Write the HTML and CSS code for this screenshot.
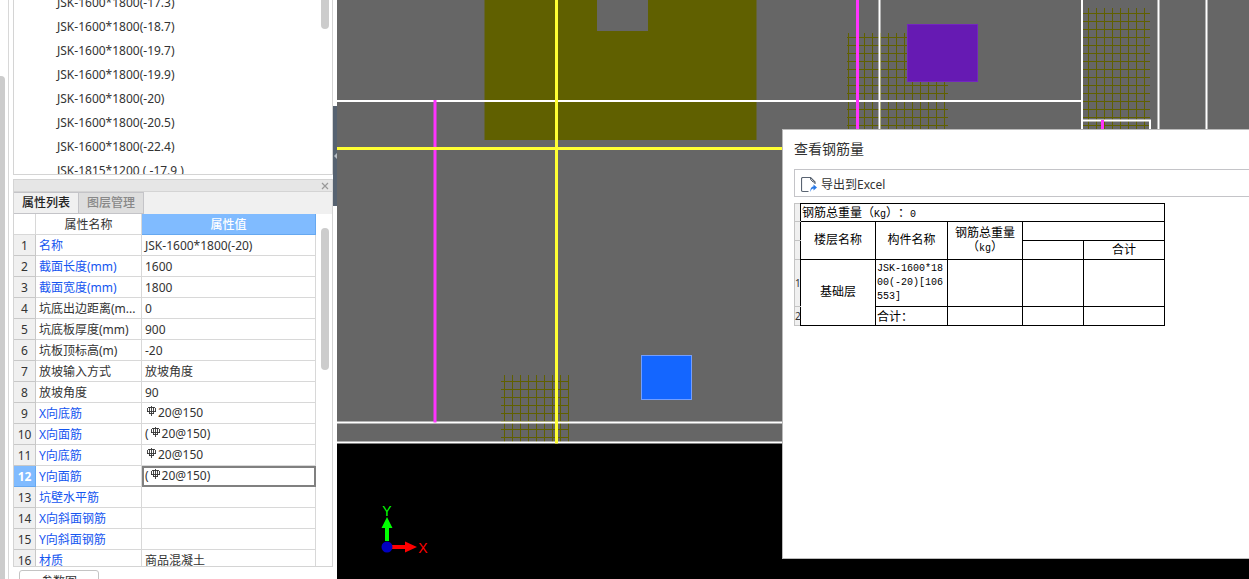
FILE: index.html
```html
<!DOCTYPE html>
<html lang="zh-CN">
<head>
<meta charset="utf-8">
<title>查看钢筋量</title>
<link rel="stylesheet" href="styles.css">
</head>
<body>
<svg class="defs" aria-hidden="true">
  <symbol id="rebar" viewBox="0 0 10 10"><path d="M4.500 0V10M2.500 1V8M6.500 1V8M1 1.500H8M.5 2V6M8.500 2V6M0 5.500H9M2 7.500H7" fill="none" stroke="#333" stroke-width=".9"/></symbol>
</svg>
<div class="app">
  <div class="rail"><div class="rail-thumb"></div></div>
  <aside class="side">
    <section class="tree">
      <ul class="tree-list">
        <li>JSK-1600*1800(-17.3)</li>
        <li>JSK-1600*1800(-18.7)</li>
        <li>JSK-1600*1800(-19.7)</li>
        <li>JSK-1600*1800(-19.9)</li>
        <li>JSK-1600*1800(-20)</li>
        <li>JSK-1600*1800(-20.5)</li>
        <li>JSK-1600*1800(-22.4)</li>
        <li>JSK-1815*1200 ( -17.9 )</li>
      </ul>
      <div class="tree-thumb"></div>
    </section>
    <section class="props">
      <div class="props-bar"><button class="close" aria-label="关闭"><svg width="8" height="8" viewBox="0 0 8 8"><path d="M1 1L7 7M7 1L1 7" stroke="#999" stroke-width="1.200"/></svg></button></div>
      <div class="tabs"><button class="tab active">属性列表</button><button class="tab">图层管理</button></div>
      <div class="props-body">
        <table class="grid">
          <colgroup><col class="c-num"><col class="c-name"><col class="c-val"></colgroup>
          <tr><th></th><th>属性名称</th><th class="sel">属性值</th></tr>
          <tr><td>1</td><td class="key">名称</td><td>JSK-1600*1800(-20)</td></tr>
          <tr><td>2</td><td class="key">截面长度(mm)</td><td>1600</td></tr>
          <tr><td>3</td><td class="key">截面宽度(mm)</td><td>1800</td></tr>
          <tr><td>4</td><td>坑底出边距离(m...</td><td>0</td></tr>
          <tr><td>5</td><td>坑底板厚度(mm)</td><td>900</td></tr>
          <tr><td>6</td><td>坑板顶标高(m)</td><td>-20</td></tr>
          <tr><td>7</td><td>放坡输入方式</td><td>放坡角度</td></tr>
          <tr><td>8</td><td>放坡角度</td><td>90</td></tr>
          <tr><td>9</td><td class="key">X向底筋</td><td class="bar"><svg class="rebar"><use href="#rebar"/></svg>20@150</td></tr>
          <tr><td>10</td><td class="key">X向面筋</td><td class="bar">(<svg class="rebar"><use href="#rebar"/></svg>20@150)</td></tr>
          <tr><td>11</td><td class="key">Y向底筋</td><td class="bar"><svg class="rebar"><use href="#rebar"/></svg>20@150</td></tr>
          <tr class="current"><td>12</td><td class="key">Y向面筋</td><td class="bar">(<svg class="rebar"><use href="#rebar"/></svg>20@150)</td></tr>
          <tr><td>13</td><td class="key">坑壁水平筋</td><td></td></tr>
          <tr><td>14</td><td class="key">X向斜面钢筋</td><td></td></tr>
          <tr><td>15</td><td class="key">Y向斜面钢筋</td><td></td></tr>
          <tr><td>16</td><td class="key">材质</td><td>商品混凝土</td></tr>
        </table>
        <div class="props-thumb"></div>
      </div>
    </section>
    <div class="foot"><button class="param">参数图</button></div>
  </aside>
  <div class="splitter"><button class="fold" aria-label="折叠"><svg width="3" height="8" viewBox="0 0 3 8"><path d="M3 1V7L0 4Z" fill="#b8bec4"/></svg></button></div>
  <main class="stage">
    <svg class="model" width="912" height="579" viewBox="337 0 912 579">
      <defs>
        <pattern id="mesh-a" width="8" height="8" patternUnits="userSpaceOnUse" x="848" y="37"><path d="M.5 0V8M0 .5H8" stroke="#606000" fill="none"/></pattern>
        <pattern id="mesh-b" width="8" height="8" patternUnits="userSpaceOnUse" x="1088" y="13"><path d="M.5 0V8M0 .5H8" stroke="#606000" fill="none"/></pattern>
        <pattern id="mesh-c" width="8" height="8" patternUnits="userSpaceOnUse" x="504" y="381"><path d="M.5 0V8M0 .5H8" stroke="#606000" fill="none"/></pattern>
      </defs>
      <path d="M337 0H1249V443H337Z" fill="#666"/>
      <path d="M484.500 0H597V31H648V0H756.500V140H484.500Z" fill="#606000"/>
      <rect x="847" y="33" width="101" height="100" fill="url(#mesh-a)"/>
      <rect x="1083" y="8" width="67" height="125" fill="url(#mesh-b)"/>
      <rect x="501" y="375" width="68" height="67" fill="url(#mesh-c)"/>
      <g fill="none" stroke="#fff" stroke-width="2">
        <path d="M337 101H1082M1082 0V130M1083 120.500H1150V130M879.500 0V130M1158.500 0V130M1206.500 0V130M337 422.500H790M337 442.500H790"/>
      </g>
      <path d="M857.500 0V130M435 100V422.500M1102.500 120V130" stroke="#ff33ff" stroke-width="3"/>
      <path d="M337 148.500H790M556.500 0V443.500" stroke="#ffff33" stroke-width="3"/>
      <rect x="907.500" y="24.500" width="70" height="57" fill="#661ab3" stroke="#7326bf"/>
      <rect x="641.500" y="355.500" width="50" height="44" fill="#1466ff" stroke="#739fff"/>
      <path d="M385 541V528H381.500L387 517L392.500 528H389V541Z" fill="#0f0"/>
      <path d="M392 545H405V541.500L417 547L405 552.500V549H392Z" fill="#f00"/>
      <circle cx="387" cy="547" r="5.500" fill="#0000c0"/>
      <text x="387" y="516" class="axis axis-y">Y</text>
      <text x="423" y="553" class="axis axis-x">X</text>
    </svg>
    <section class="dialog" role="dialog" aria-labelledby="dlg-title">
      <h1 id="dlg-title">查看钢筋量</h1>
      <div class="toolbar"><button class="export"><svg width="16" height="16" viewBox="0 0 16 16"><path d="M7.500 14.500H2Q.5 14.500 .5 13V2Q.5 .5 2 .5H9.500L14 5V7" fill="none" stroke="#5a6472" stroke-width="1.200"/><path d="M9.500 .5V2.500L12 5H14" fill="none" stroke="#5a6472"/><path d="M9.500 15C9 11 11 9.500 12.500 9.500V7.500L16 10.500L12.500 13.500V11.500C11 11.500 10 12.500 9.500 15Z" fill="#2878e6"/></svg>导出到Excel</button></div>
      <table class="report">
        <colgroup><col class="r-num"><col class="r-floor"><col class="r-part"><col class="r-total"><col class="r-a"><col class="r-b"></colgroup>
        <tr class="h18"><td class="idx"></td><td colspan="5" class="left">钢筋总重量（<span class="mono">Kg</span>）：<span class="mono">0</span></td></tr>
        <tr class="h19"><td class="idx"></td><td rowspan="2">楼层名称</td><td rowspan="2">构件名称</td><td rowspan="2">钢筋总重量<br>（<span class="mono">kg</span>）</td><td colspan="2"></td></tr>
        <tr class="h19"><td class="idx"></td><td></td><td>合计</td></tr>
        <tr class="h47"><td class="idx">1</td><td rowspan="2">基础层</td><td class="left mono">JSK-1600*18<br>00(-20)[106<br>553]</td><td></td><td></td><td></td></tr>
        <tr class="h19"><td class="idx">2</td><td class="left">合计：</td><td></td><td></td><td></td></tr>
      </table>
    </section>
  </main>
</div>
</body>
</html>
```
FILE: styles.css
```css
* { box-sizing: border-box; }
body {
  margin: 0;
  font: 12px/20px "Noto Sans", "Noto Sans CJK SC", sans-serif;
  color: #333;
  background: #fff;
}
button { font: inherit; color: inherit; border: 0; padding: 0; background: none; }
.defs { position: absolute; width: 0; height: 0; }
.app { display: flex; height: 100vh; overflow: hidden; }

.rail { flex: none; width: 9px; border-right: 1px solid #d8d8d8; padding-top: 76px; }
.rail-thumb { width: 5px; height: 100%; background: #ccc; border-radius: 0 4px 0 0; }

.side { flex: none; width: 324px; padding-left: 4px; display: flex; flex-direction: column; }
.tree { flex: none; height: 175px; display: flex; justify-content: space-between; align-items: flex-start; overflow: hidden; border: 1px solid #d4d4d4; border-top: 0; padding-right: 3px; }
.tree-list { list-style: none; margin: -9px 0 0; padding: 0 0 0 43px; line-height: 24px; white-space: nowrap; }
.tree-thumb { width: 8px; height: 29px; background: #ccc; border-radius: 0 0 4px 4px; }

.props { flex: 1; min-height: 0; margin-top: 4px; display: flex; flex-direction: column; border: 1px solid #d4d4d4; }
.props-bar { flex: none; height: 12px; display: flex; justify-content: flex-end; padding-right: 3px; background: #e6e6e6; border-bottom: 1px solid #d4d4d4; }
.close { display: flex; align-items: center; }
.tabs { flex: none; display: flex; height: 22px; background: #f0f0f0; }
.tab { width: 65px; color: #888; background: #dedede; border: 1px solid #c4c4c8; border-left: 0; font-weight: 500; }
.tab.active { color: #222; background: #f0f0f0; }
.props-body { flex: 1; min-height: 0; overflow: hidden; display: flex; align-items: flex-start; justify-content: space-between; padding-right: 3px; }
.props-thumb { width: 8px; height: 142px; margin-top: 14px; background: #ccc; border-radius: 4px; }

.grid { table-layout: fixed; width: 302px; border-collapse: separate; border-spacing: 0; }
.c-num { width: 22px; }
.c-name { width: 106px; }
.c-val { width: 174px; }
.grid th, .grid td { height: 21px; padding: 2px 3px 0; line-height: 18px; white-space: nowrap; text-align: left; border-right: 1px solid #d8d8d8; border-bottom: 1px solid #d8d8d8; }
.grid th { font-weight: 400; text-align: center; }
.grid th.sel { color: #fff; font-weight: 500; background: #80bbff; border-color: #66a8f0; }
.grid td:first-child { padding: 2px 0 0; text-align: center; background: #f0f0f0; border-color: #c8c8c8; }
.grid td.bar { padding: 1px 3px; }
.grid .key { color: #1455f0; }
.grid .current td:first-child { color: #fff; font-weight: 700; background: #80bbff; border-color: #66a8f0; }
.grid .current td:last-child { outline: 2px solid #808080; outline-offset: -2px; }
.rebar { width: 10px; height: 10px; margin: 0 1px 0 2px; vertical-align: 1px; }

.foot { flex: none; height: 12px; padding: 3px 0 0 6px; overflow: hidden; }
.param { width: 80px; height: 24px; border: 1px solid #c4c4c4; border-radius: 3px; }

.splitter { flex: none; width: 4px; padding-top: 106px; background: #fff; }
.fold { width: 4px; height: 100px; display: flex; align-items: center; justify-content: flex-end; background: #566270; }

.stage { flex: 1; min-width: 0; position: relative; overflow: hidden; background: #000; }
.model { display: block; }
.axis { font: 14px "Liberation Sans", sans-serif; text-anchor: middle; }
.axis-y { fill: #0f0; }
.axis-x { fill: #f00; }

.dialog { position: absolute; left: 445px; right: 0; top: 129px; bottom: 20px; padding: 9px 0 0 11px; background: #fff; border: 1px solid #bbb; border-right: 0; }
.dialog h1 { margin: 0; font-size: 14px; line-height: 20px; font-weight: 400; }
.toolbar { margin-top: 10px; height: 28px; display: flex; align-items: center; padding: 3px 0 0 6px; border: 1px solid #c4c4c8; border-right: 0; }
.export { display: flex; align-items: center; gap: 4px; }

.report { margin-top: 6px; table-layout: fixed; width: 370px; border-collapse: collapse; color: #000; font-family: "Noto Sans CJK SC", sans-serif; line-height: 14px; text-spacing-trim: space-all; }
.r-num { width: 6px; }
.r-floor { width: 75px; }
.r-part { width: 72px; }
.r-total { width: 75px; }
.r-a { width: 61px; }
.r-b { width: 81px; }
.report td { padding: 0 1px 3px; border: 1px solid #000; text-align: center; }
.report .idx { padding: 0; color: #333; background: #f0f0f0; border-color: #c4c4c4; border-right-color: #000; font-family: "Noto Sans", sans-serif; font-size: 10px; }
.report .left { padding-bottom: 1px; text-align: left; }
.mono { font-family: "Liberation Mono", monospace; font-size: 10px; }
span.mono { line-height: 10px; }
.report .h18 td { padding-bottom: 0; }
.h18 { height: 18px; }
.h19 { height: 19px; }
.h47 { height: 47px; }
```
